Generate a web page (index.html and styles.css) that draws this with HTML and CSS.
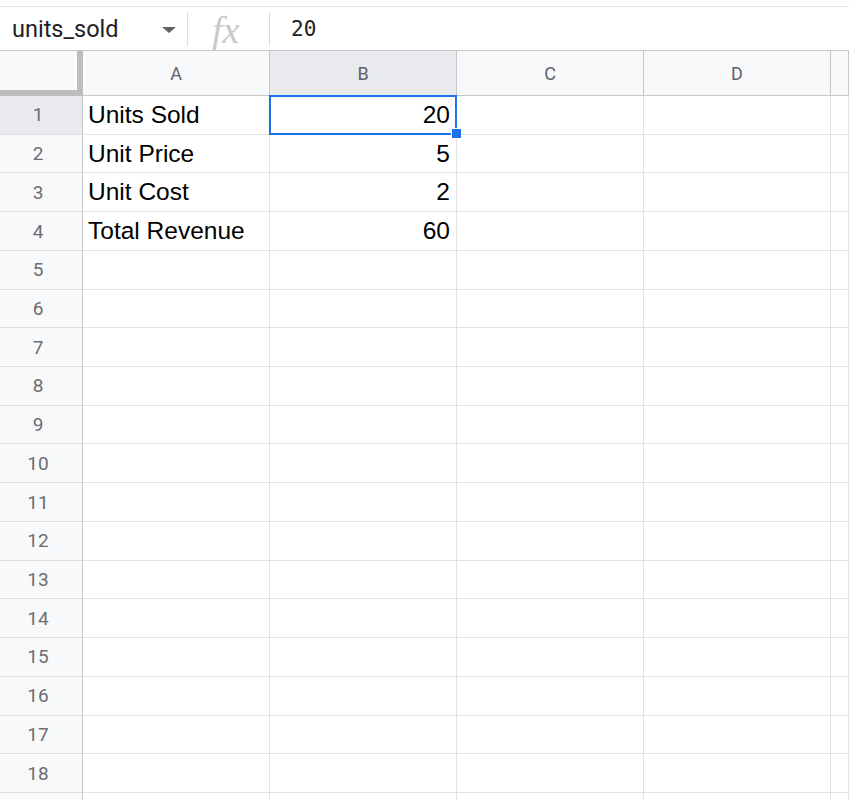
FILE: index.html
```html
<!DOCTYPE html>
<html lang="en">
<head>
  <meta charset="UTF-8" />
  <title>Sheet</title>
  <link rel="stylesheet" href="styles.css">
</head>
<body>
  <div class="formula-bar">
    <div class="name-box">
      <span class="name">units_sold</span>
      <span class="caret"></span>
    </div>
    <div class="fx">fx</div>
    <div class="value">20</div>
  </div>

  <div class="grid">
    <div class="corner"></div>
    <div class="col-head">A</div>
    <div class="col-head active">B</div>
    <div class="col-head">C</div>
    <div class="col-head">D</div>
    <div class="col-head"></div>

    <div class="row-head active">1</div>
    <div class="cell">Units Sold</div>
    <div class="cell num selected">20</div>
    <div class="cell"></div><div class="cell"></div><div class="cell"></div>

    <div class="row-head">2</div>
    <div class="cell">Unit Price</div>
    <div class="cell num">5</div>
    <div class="cell"></div><div class="cell"></div><div class="cell"></div>

    <div class="row-head">3</div>
    <div class="cell">Unit Cost</div>
    <div class="cell num">2</div>
    <div class="cell"></div><div class="cell"></div><div class="cell"></div>

    <div class="row-head">4</div>
    <div class="cell">Total Revenue</div>
    <div class="cell num">60</div>
    <div class="cell"></div><div class="cell"></div><div class="cell"></div>

    <div class="row-head">5</div><div class="cell"></div><div class="cell"></div><div class="cell"></div><div class="cell"></div><div class="cell"></div>
    <div class="row-head">6</div><div class="cell"></div><div class="cell"></div><div class="cell"></div><div class="cell"></div><div class="cell"></div>
    <div class="row-head">7</div><div class="cell"></div><div class="cell"></div><div class="cell"></div><div class="cell"></div><div class="cell"></div>
    <div class="row-head">8</div><div class="cell"></div><div class="cell"></div><div class="cell"></div><div class="cell"></div><div class="cell"></div>
    <div class="row-head">9</div><div class="cell"></div><div class="cell"></div><div class="cell"></div><div class="cell"></div><div class="cell"></div>
    <div class="row-head">10</div><div class="cell"></div><div class="cell"></div><div class="cell"></div><div class="cell"></div><div class="cell"></div>
    <div class="row-head">11</div><div class="cell"></div><div class="cell"></div><div class="cell"></div><div class="cell"></div><div class="cell"></div>
    <div class="row-head">12</div><div class="cell"></div><div class="cell"></div><div class="cell"></div><div class="cell"></div><div class="cell"></div>
    <div class="row-head">13</div><div class="cell"></div><div class="cell"></div><div class="cell"></div><div class="cell"></div><div class="cell"></div>
    <div class="row-head">14</div><div class="cell"></div><div class="cell"></div><div class="cell"></div><div class="cell"></div><div class="cell"></div>
    <div class="row-head">15</div><div class="cell"></div><div class="cell"></div><div class="cell"></div><div class="cell"></div><div class="cell"></div>
    <div class="row-head">16</div><div class="cell"></div><div class="cell"></div><div class="cell"></div><div class="cell"></div><div class="cell"></div>
    <div class="row-head">17</div><div class="cell"></div><div class="cell"></div><div class="cell"></div><div class="cell"></div><div class="cell"></div>
    <div class="row-head">18</div><div class="cell"></div><div class="cell"></div><div class="cell"></div><div class="cell"></div><div class="cell"></div>
    <div class="row-head"></div><div class="cell"></div><div class="cell"></div><div class="cell"></div><div class="cell"></div><div class="cell"></div>
  </div>
</body>
</html>
```

FILE: styles.css
```css
body {
  margin: 0;
  padding-top: 6px;
  background: #fff;
  font-family: Roboto, 'Liberation Sans', sans-serif;
  overflow: hidden;
}
.formula-bar {
  display: flex;
  align-items: center;
  height: 43px;
  border-top: 1px solid #e3e3e3;
  border-bottom: 1px solid #c7c7c7;
}
.name-box {
  display: flex;
  align-items: center;
  width: 188px;
  height: 34px;
  padding-left: 12px;
  box-sizing: border-box;
  border-right: 1px solid #dadce0;
}
.name {
  font-size: 23.5px;
  color: #202124;
  flex: 1;
}
.caret {
  width: 0;
  height: 0;
  border-left: 7px solid transparent;
  border-right: 7px solid transparent;
  border-top: 6px solid #5f6368;
  margin-right: 11px;
  margin-top: 2px;
}
.fx {
  width: 82px;
  height: 34px;
  box-sizing: border-box;
  border-right: 1px solid #dadce0;
  padding-left: 24px;
  font-family: 'Liberation Serif', serif;
  font-style: italic;
  font-size: 38px;
  line-height: 36px;
  color: #c8c8c8;
  overflow: visible;
}
.value {
  padding-left: 21px;
  font-family: 'DejaVu Sans Mono', 'Liberation Mono', monospace;
  font-variant-numeric: slashed-zero;
  font-size: 21px;
  color: #202124;
}
.grid {
  display: grid;
  grid-template-columns: 83px 187px 187px 187px 187px 1fr;
  grid-template-rows: 45px;
  grid-auto-rows: 38.72px;
}
.corner {
  background: #f8f9fa;
  border-right: 6px solid #bdbdbd;
  border-bottom: 6px solid #bdbdbd;
}
.col-head {
  background: #f8f9fa;
  border-right: 1px solid #c7c7c7;
  border-bottom: 1px solid #c7c7c7;
  display: flex;
  align-items: center;
  justify-content: center;
  font-size: 18px;
  color: #5f6368;
}
.col-head.active,
.row-head.active {
  background: #e8eaed;
}
.row-head {
  background: #f8f9fa;
  border-right: 1px solid #c7c7c7;
  border-bottom: 1px solid #dcdcdc;
  display: flex;
  align-items: center;
  justify-content: center;
  padding-right: 6px;
  font-size: 19px;
  color: #6b6e72;
}
.cell {
  border-right: 1px solid #e2e2e2;
  border-bottom: 1px solid #e2e2e2;
  display: flex;
  align-items: center;
  padding: 0 6px 0 5px;
  font-family: 'Liberation Sans', Arial, sans-serif;
  font-size: 24.5px;
  color: #000;
  white-space: nowrap;
  min-width: 0;
}
.cell.num {
  justify-content: flex-end;
}
.selected {
  position: relative;
}
.selected::before {
  content: "";
  position: absolute;
  left: -1px;
  top: -1px;
  right: -1px;
  bottom: -1px;
  border: 2px solid #1a73e8;
}
.selected::after {
  content: "";
  position: absolute;
  right: -6px;
  bottom: -5px;
  width: 9px;
  height: 9px;
  background: #1a73e8;
  border: 1px solid #fff;
}
```
